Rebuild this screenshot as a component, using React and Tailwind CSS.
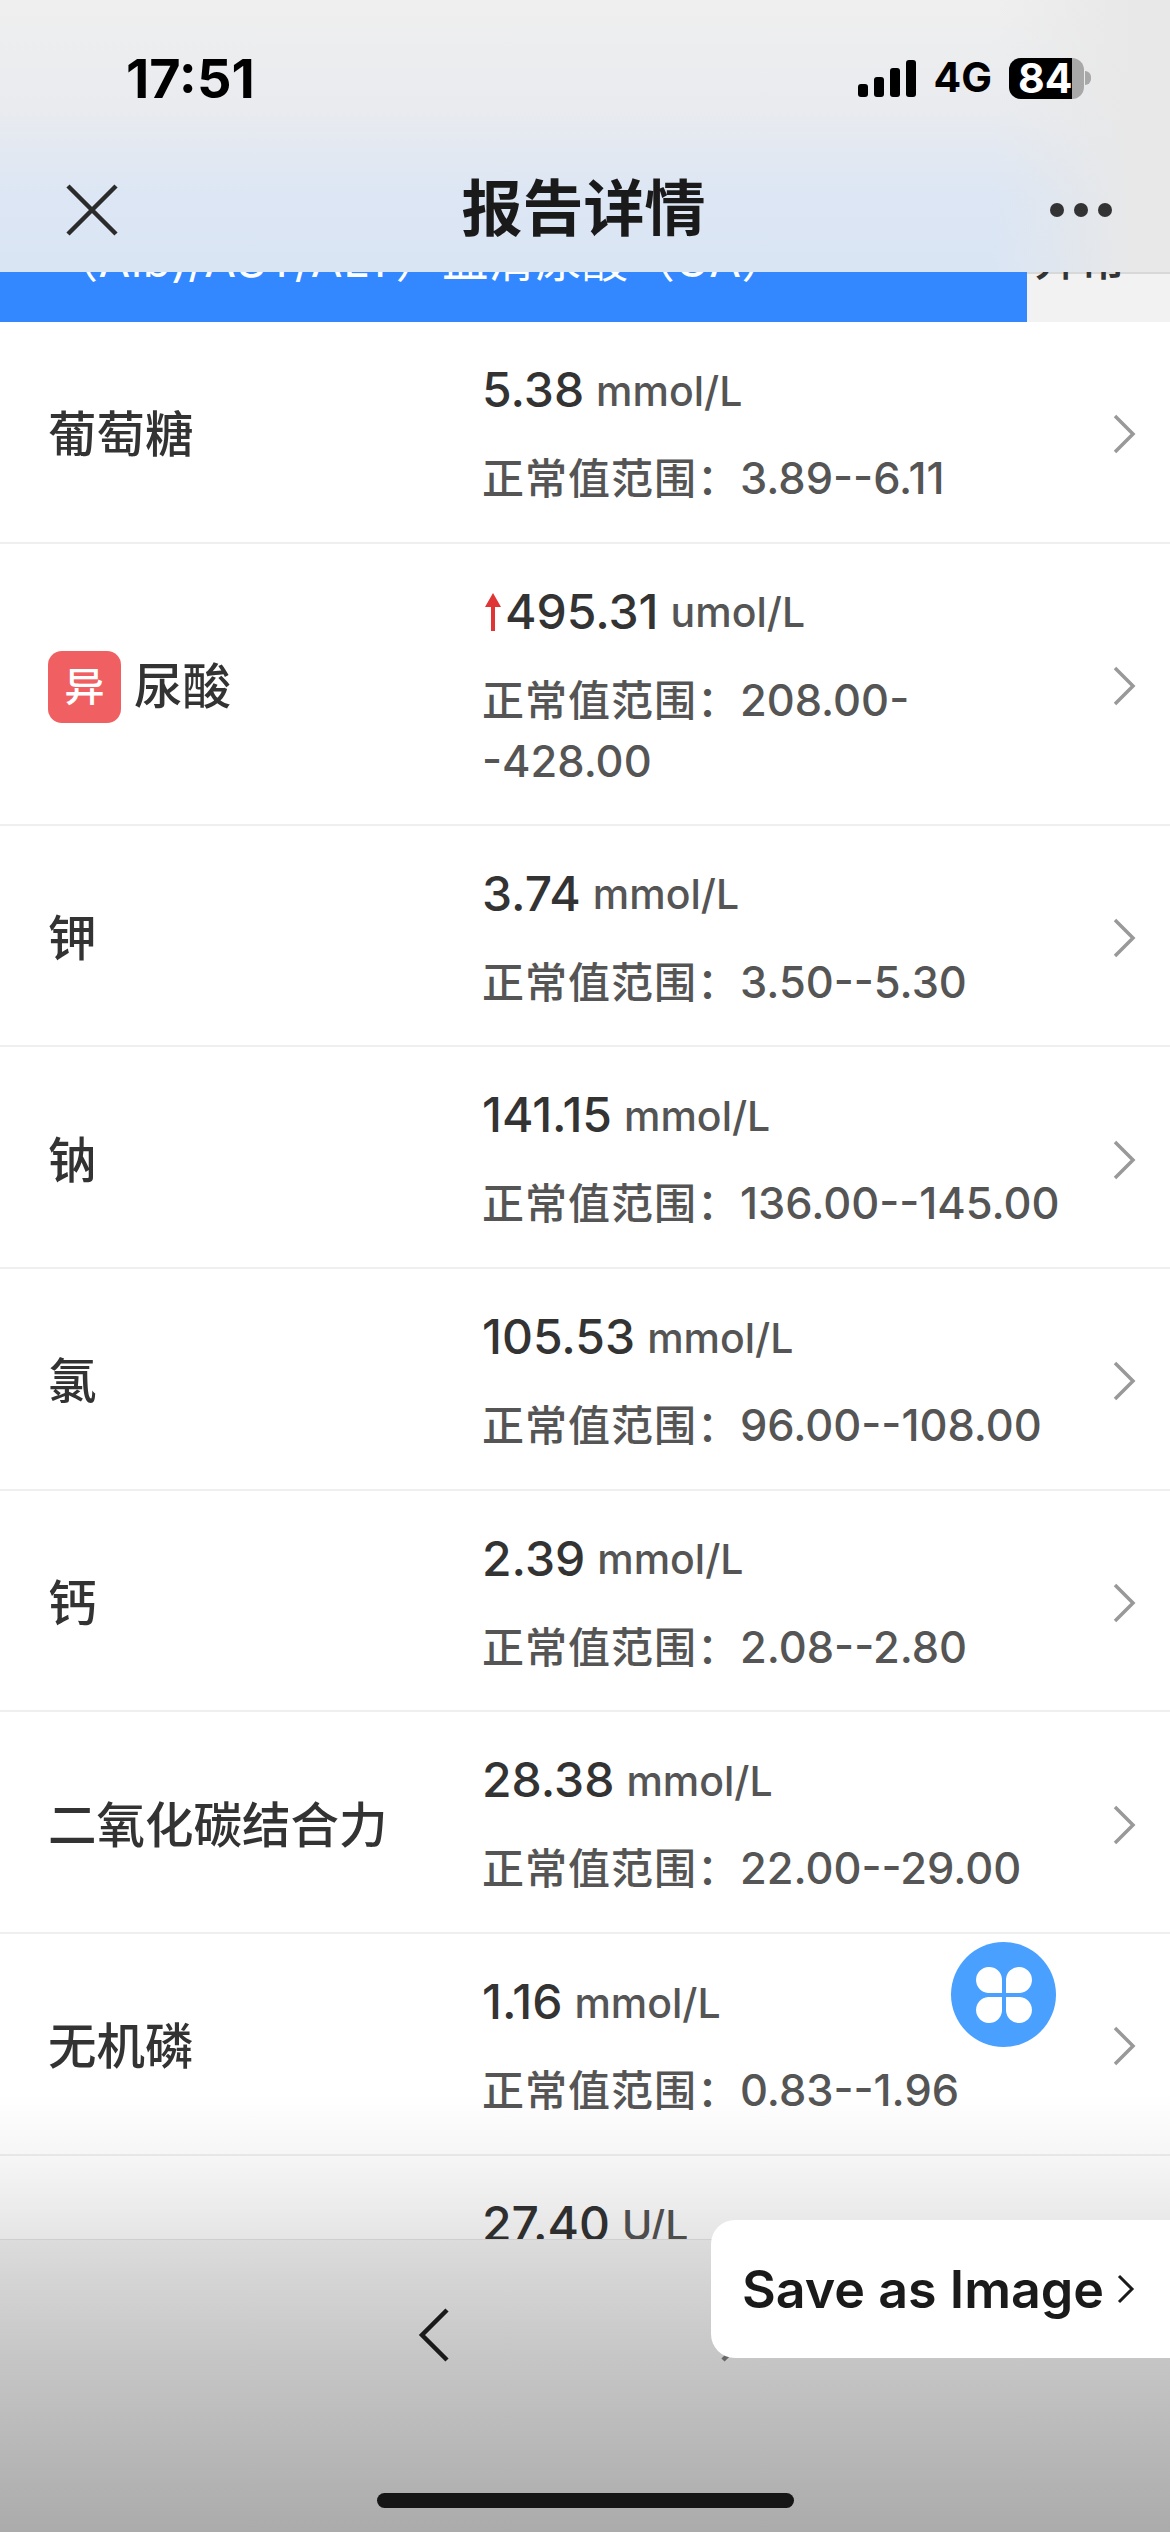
import React from "react";

const rows = [
  { name: "葡萄糖", value: "5.38", unit: "mmol/L", range: ["3.89--6.11"] },
  { name: "尿酸", value: "495.31", unit: "umol/L", range: ["208.00-", "-428.00"], high: true },
  { name: "钾", value: "3.74", unit: "mmol/L", range: ["3.50--5.30"] },
  { name: "钠", value: "141.15", unit: "mmol/L", range: ["136.00--145.00"] },
  { name: "氯", value: "105.53", unit: "mmol/L", range: ["96.00--108.00"] },
  { name: "钙", value: "2.39", unit: "mmol/L", range: ["2.08--2.80"] },
  { name: "二氧化碳结合力", value: "28.38", unit: "mmol/L", range: ["22.00--29.00"] },
  { name: "无机磷", value: "1.16", unit: "mmol/L", range: ["0.83--1.96"] },
  { name: "", value: "27.40", unit: "U/L", range: null },
];

function Chevron() {
  return (
    <svg width="24" height="40" viewBox="0 0 24 40" className="shrink-0">
      <path d="M3 2 L21 20 L3 38" fill="none" stroke="#999999" strokeWidth="3.5" />
    </svg>
  );
}

function Row({ r }) {
  return (
    <div className={`flex items-center border-b-2 border-[#efefef] pt-[5px] pl-[48px] pr-[34px] ${r.high ? "h-[282px]" : "h-[221.7px]"} shrink-0`}>
      <div className="w-[434px] shrink-0 flex items-center text-[48.5px] leading-[60px] text-[#333333] font-medium pt-[2px]">
        {r.high && (
          <span className="w-[73px] h-[72px] mr-[13px] rounded-[14px] bg-[#f06062] text-white text-[40px] flex items-center justify-center font-medium">
            异
          </span>
        )}
        {r.name}
      </div>
      <div className="flex-1 min-w-0">
        <div className="flex items-center h-[60px] whitespace-nowrap">
          {r.high && (
            <svg width="24" height="40" viewBox="0 0 24 40" className="shrink-0 -ml-[1px]">
              <path d="M12 1 L20 15 L14 15 L14 39 L10 39 L10 15 L4 15 Z" fill="#e03535" />
            </svg>
          )}
          <span className="text-[48px] text-[#333333] font-medium">{r.value}</span>
          <span className="text-[41px] text-[#555555] font-medium ml-[12px] mt-[3px]">{r.unit}</span>
        </div>
        <div className="mt-[28px] min-h-[60px] text-[43.4px] leading-[60px] text-[#555555] font-medium whitespace-nowrap">
          {r.range &&
            r.range.map((line, i) => (
              <div key={i}>
                {i === 0 && <span className="text-[42px] tracking-[1px]">正常值范围：</span>}
                {line}
              </div>
            ))}
        </div>
      </div>
      <Chevron />
    </div>
  );
}

export default function App() {
  return (
    <div className="relative w-[1170px] h-[2532px] overflow-hidden flex flex-col bg-white font-['Inter','Noto_Sans_CJK_SC',sans-serif]">
      <header className="h-[272px] shrink-0 bg-[linear-gradient(90deg,transparent_85%,#e8e8e8_97%),linear-gradient(180deg,#efefef_0%,#e9ebef_40%,#dce6f4_72%,#dae5f4_100%)]">
        <div className="h-[148px] flex justify-between items-start pt-[57px] pl-[126px] pr-[79px]">
          <span className="text-[54px] leading-[44px] font-bold text-black">17:51</span>
          <div className="flex items-center h-[42px]">
            <div className="flex items-end gap-[6px] h-[37px]">
              <span className="w-[10px] h-[13px] rounded-[3px] bg-black" />
              <span className="w-[10px] h-[20px] rounded-[3px] bg-black" />
              <span className="w-[10px] h-[29px] rounded-[3px] bg-black" />
              <span className="w-[10px] h-[37px] rounded-[3px] bg-black" />
            </div>
            <span className="ml-[18px] text-[41px] font-bold text-black">4G</span>
            <div className="ml-[17px] w-[75px] h-[41px] rounded-[12px] overflow-hidden bg-[#a8a8a8] flex">
              <span className="w-[63px] h-full bg-black text-white text-[41px] font-bold leading-[41px] pl-[9px] whitespace-nowrap">84</span>
            </div>
            <span className="w-[6px] h-[14px] rounded-r-full bg-[#a8a8a8] ml-[1px]" />
          </div>
        </div>
        <div className="h-[124px] flex items-center justify-between pl-[66px] pr-[58px]">
          <svg width="52" height="52" viewBox="0 0 52 52">
            <path d="M2 2 L50 50 M50 2 L2 50" stroke="#2b2b2b" strokeWidth="4.5" fill="none" />
          </svg>
          <h1 className="text-[61px] leading-[70px] font-semibold text-[#1a1a1a] -ml-[1px] -mt-[3px]">报告详情</h1>
          <div className="flex gap-[10px]">
            <span className="w-[14px] h-[14px] rounded-full bg-[#333333]" />
            <span className="w-[14px] h-[14px] rounded-full bg-[#333333]" />
            <span className="w-[14px] h-[14px] rounded-full bg-[#333333]" />
          </div>
        </div>
      </header>

      <div className="h-[50px] shrink-0 flex overflow-hidden">
        <div className="w-[1027px] bg-[#3388ff] pl-[52px] text-white text-[46px] leading-[60px] overflow-hidden">
          <div className="-mt-[42px] whitespace-nowrap tracking-[0.6px]">（Alb)/AST/ALT）血清尿酸（UA）</div>
        </div>
        <div className="flex-1 bg-[#f2f2f2] border-t-2 border-[#d8d8d8] text-[#333333] text-[46px] leading-[60px] pl-[7px] font-medium">
          <div className="-mt-[46px]">异常</div>
        </div>
      </div>

      <div className="relative flex-1 min-h-0 overflow-hidden flex flex-col">
        {rows.map((r, i) => (
          <Row key={i} r={r} />
        ))}
        <div className="absolute left-0 right-0 bottom-0 h-[146px] bg-[linear-gradient(180deg,rgba(0,0,0,0)_0%,rgba(0,0,0,0.045)_50%,rgba(0,0,0,0.1)_100%)]" />
      </div>

      <footer className="relative h-[293px] shrink-0 border-t border-[#cfcfcf] bg-[linear-gradient(180deg,#dcdcdc_0%,#c6c6c6_40%,#ababab_100%)]">
        <div className="flex justify-center gap-[270px] pt-[68px]">
          <svg width="32" height="54" viewBox="0 0 32 54">
            <path d="M29 2 L4 27 L29 52" fill="none" stroke="#1a1a1a" strokeWidth="4.5" />
          </svg>
          <svg width="32" height="54" viewBox="0 0 32 54">
            <path d="M3 2 L28 27 L3 52" fill="none" stroke="#666666" strokeWidth="4.5" />
          </svg>
        </div>
        <div className="absolute bottom-[24px] left-[377px] w-[417px] h-[15px] rounded-full bg-[#161616]" />
      </footer>

      <div className="absolute left-[711px] top-[2220px] right-0 h-[138px] bg-white rounded-l-[24px] flex items-center pl-[31px]">
        <span className="text-[52px] font-semibold text-[#1a1a1a] whitespace-nowrap mt-[1px]">Save as Image</span>
        <svg width="20" height="30" viewBox="0 0 20 30" className="ml-[12px]">
          <path d="M3 2 L16 15 L3 28" fill="none" stroke="#1a1a1a" strokeWidth="3" />
        </svg>
      </div>

      <div className="absolute left-[951px] top-[1942px] w-[105px] h-[105px] rounded-full bg-[#4aa0ff] flex items-center justify-center">
        <svg width="58" height="58" viewBox="0 0 58 58">
          <path d="M27 27 H13 A13 13 0 1 1 27 13 Z M31 27 V13 A13 13 0 1 1 45 27 Z M27 31 V45 A13 13 0 1 1 13 31 Z M31 31 H45 A13 13 0 1 1 31 45 Z" fill="#ffffff" />
        </svg>
      </div>
    </div>
  );
}
